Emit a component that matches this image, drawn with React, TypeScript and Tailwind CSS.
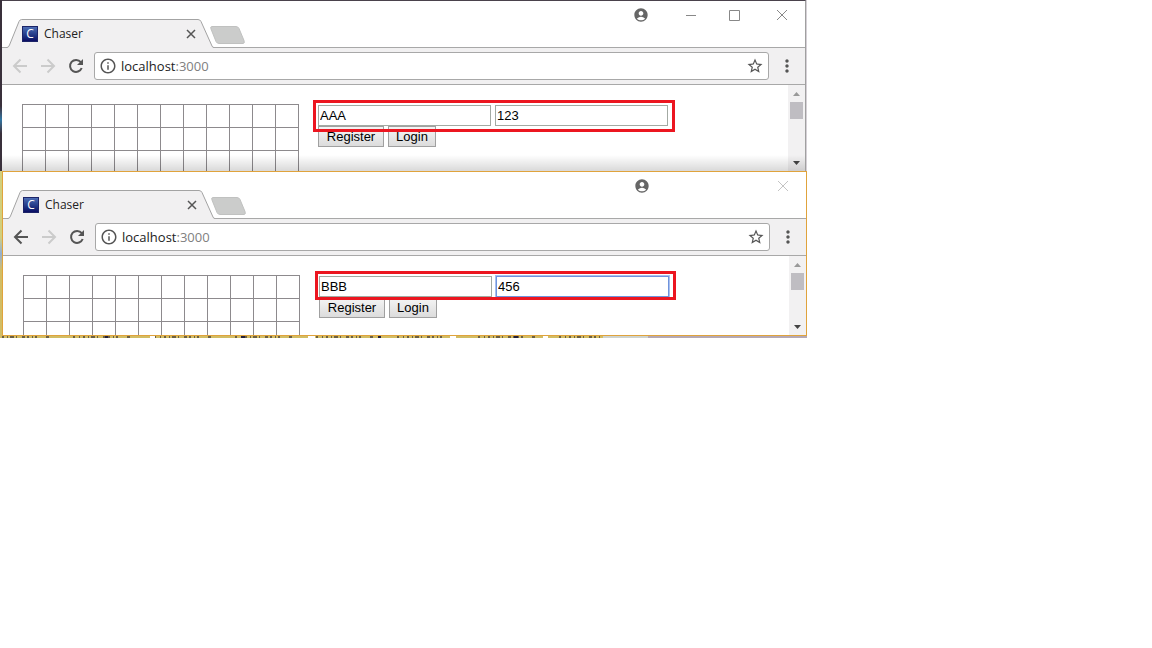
import React from "react";
import { MdAccountCircle, MdInfoOutline, MdMoreVert, MdStarBorder } from "react-icons/md";

type BrowserWindowProps = {
  id: string;
  user: string;
  pass: string;
  active: boolean;
};

function WindowControls({ active }: { active: boolean }) {
  return (
    <div className="flex h-7 items-center text-[#888888]">
      <button type="button" aria-label="Account" className="mr-9 text-[#666666]">
        <MdAccountCircle size={16} />
      </button>
      <button type="button" aria-label="Minimize" className={active ? "invisible mr-8" : "mr-8"}>
        <svg width="12" height="12" viewBox="0 0 12 12" fill="none" stroke="currentColor">
          <path d="M1 6.5h10" />
        </svg>
      </button>
      <button type="button" aria-label="Maximize" className={active ? "invisible mr-9" : "mr-9"}>
        <svg width="11" height="11" viewBox="0 0 11 11" fill="none" stroke="currentColor">
          <path d="M.5.5h10v10h-10z" />
        </svg>
      </button>
      <button type="button" aria-label="Close" className={active ? "mr-[17px] text-[#c4c4c4]" : "mr-[17px]"}>
        <svg width="12" height="12" viewBox="0 0 12 12" fill="none" stroke="currentColor">
          <path d="M1 1l10 10M11 1L1 11" />
        </svg>
      </button>
    </div>
  );
}

function Tab() {
  return (
    <div className="relative -mb-px ml-1 flex h-[29px] w-[208px] items-center pt-px">
      <svg className="absolute inset-0" width="208" height="29" viewBox="0 0 208 29">
        <path d="M0 29V28.5H1Q2.500 28.500 3.500 26L13 2.500Q14 .5 15.500 .5H192Q194 .5 195 2.500L206 27Q206.500 28.500 208 28.500V29Z" fill="#f1f0f1" />
        <path d="M0 28.5H1Q2.500 28.500 3.500 26L13 2.500Q14 .5 15.500 .5H192Q194 .5 195 2.500L206 27Q206.500 28.500 208 28.500" fill="none" stroke="#a3a3a3" />
      </svg>
      <span className="relative ml-4 flex size-4 items-center justify-center border border-[#1c2468] bg-linear-to-b from-[#4c6cb4] to-[#0c0c64] font-['Open_Sans',sans-serif] text-[12px] leading-3 text-white">
        C
      </span>
      <span className="relative ml-1.5 flex-1 font-['Open_Sans',sans-serif] text-[12px] leading-4 text-[#222222]">
        Chaser
      </span>
      <button type="button" aria-label="Close tab" className="relative mr-[18px] text-[#555555]">
        <svg width="10" height="10" viewBox="0 0 10 10" fill="none" stroke="currentColor" strokeWidth="1.500">
          <path d="M1 1l8 8M9 1L1 9" />
        </svg>
      </button>
    </div>
  );
}

function Toolbar({ active }: { active: boolean }) {
  return (
    <div className="flex h-[37px] items-center border-b border-[#a8a8a8] bg-[#f1f0f1] pl-2 text-[#555555]">
      <button type="button" aria-label="Back" className={active ? "mr-2" : "mr-2 text-[#cbcbcb]"}>
        <svg width="20" height="20" viewBox="0 0 20 20" fill="none" stroke="currentColor" strokeWidth="2">
          <path d="M17 10H4.500M10.500 3.500L4 10l6.500 6.500" />
        </svg>
      </button>
      <button type="button" aria-label="Forward" className="mr-2 text-[#cbcbcb]">
        <svg width="20" height="20" viewBox="0 0 20 20" fill="none" stroke="currentColor" strokeWidth="2">
          <path d="M3 10h12.500M9.500 3.500L16 10l-6.500 6.500" />
        </svg>
      </button>
      <button type="button" aria-label="Reload" className="mr-2">
        <svg width="20" height="20" viewBox="0 0 20 20" fill="none" stroke="currentColor" strokeWidth="2">
          <path d="M14.800 6.200A6 6 0 1 0 15.700 12" />
          <path d="M17 3v6h-6z" fill="currentColor" stroke="none" />
        </svg>
      </button>
      <div className="flex h-7 min-w-0 flex-1 items-center rounded-[3px] border border-[#a8a8a8] bg-white px-1">
        <MdInfoOutline size={18} />
        <a href="http://localhost:3000" className="ml-1 flex-1 font-['Open_Sans',sans-serif] text-[13px] leading-5 text-[#222222]">
          localhost<span className="text-[#808080]">:3000</span>
        </a>
        <button type="button" aria-label="Bookmark">
          <MdStarBorder size={18} />
        </button>
      </div>
      <button type="button" aria-label="Menu" className="mx-2">
        <MdMoreVert size={20} />
      </button>
    </div>
  );
}

function Board() {
  return (
    <div className="ml-5 mt-[19px] grid w-[277px] shrink-0 grid-cols-12 border-l border-t border-[#8d8a8d]">
      {Array.from({ length: 48 }, (_, i) => (
        <div key={i} className="h-[23px] border-b border-r border-[#8d8a8d]" />
      ))}
    </div>
  );
}

function Scrollbar() {
  return (
    <div className="flex w-[17px] shrink-0 flex-col items-center bg-[#f2f1f2] pb-1.5 pt-[7px]">
      <svg width="7" height="4" viewBox="0 0 7 4" fill="#999999">
        <path d="M0 4L3.500 0 7 4Z" />
      </svg>
      <div className="mt-1.5 h-[17px] w-[13px] bg-[#bfbdc2]" />
      <svg className="mt-auto" width="7" height="4" viewBox="0 0 7 4" fill="#444444">
        <path d="M0 0H7L3.500 4Z" />
      </svg>
    </div>
  );
}

const field =
  "h-[21px] w-[173px] border bg-white px-px font-['Liberation_Sans',sans-serif] text-[13px] leading-4 text-black outline-none";
const action =
  "h-[21px] border border-[#a0a0a0] bg-linear-to-b from-[#f5f5f5] to-[#dcdcdc] font-['Liberation_Sans',sans-serif] text-[13px] leading-4 text-black";

function LoginForm({ id, user, pass, active }: BrowserWindowProps) {
  return (
    <form className="ml-[19px] mt-5 min-w-0 flex-1" onSubmit={(e) => e.preventDefault()}>
      <div className="relative flex w-[350px] gap-1">
        <input id={`${id}-user`} aria-label="User name" defaultValue={user} className={`${field} border-[#a3aaa3]`} />
        <input
          id={`${id}-pass`}
          aria-label="Password"
          defaultValue={pass}
          className={`${field} ${active ? "border-[#6f93dc] ring-1 ring-[#a9c0ee]" : "border-[#a3aaa3]"}`}
        />
        <div
          className={
            active
              ? "pointer-events-none absolute -bottom-[3px] -left-1 -right-[7px] -top-[5px] border-3 border-[#ec1620]"
              : "pointer-events-none absolute -bottom-1.5 -left-[5px] -right-[7px] -top-[5px] border-3 border-[#ec1620]"
          }
        />
      </div>
      <div className="flex gap-1">
        <button type="submit" className={`${action} w-[66px]`}>Register</button>
        <button type="button" className={`${action} w-12`}>Login</button>
      </div>
    </form>
  );
}

function BrowserWindow(props: BrowserWindowProps) {
  const { active } = props;
  return (
    <section
      className={
        active
          ? "min-w-0 flex-1 border border-[#e0a33c] bg-white"
          : "min-w-0 flex-1 border-r border-t border-r-[#a0a0a0] border-t-[#4a424c] bg-white"
      }
    >
      <header className="flex h-[47px] items-end justify-between border-b border-[#a8a8a8]">
        <div className="flex">
          <Tab />
          <button type="button" aria-label="New tab" className="-ml-1 mt-[7px] h-[18px]">
            <svg width="36" height="18" viewBox="0 0 36 18">
              <path d="M2 .5H26Q28 .5 29 2.500L34 14.500Q35 17.500 33 17.500H9Q7 17.500 6 15.500L1 3Q0 .5 2 .5Z" fill="#cbcccb" stroke="#c0c1c0" />
            </svg>
          </button>
        </div>
        <div className="self-start">
          <WindowControls active={active} />
        </div>
      </header>
      <Toolbar active={active} />
      <div className={active ? "relative flex h-[79px] overflow-hidden" : "relative flex h-[86px] overflow-hidden"}>
        <Board />
        <LoginForm {...props} />
        <Scrollbar />
        {!active && (
          <div className="pointer-events-none absolute inset-x-0 bottom-0 h-4 bg-linear-to-b from-transparent to-black/15" />
        )}
      </div>
    </section>
  );
}

function DesktopEdge() {
  return (
    <svg className="block h-0.5 w-full" viewBox="0 0 807 2" preserveAspectRatio="none" fill="none">
      <path d="M0 1H605" stroke="#d2bd64" strokeWidth="2" />
      <path d="M2 1H602" stroke="#6b6044" strokeWidth="2" strokeDasharray="2 3 1 2 4 2 1 5 3 2 2 3 1 2 2 9 3 24 2 4 1 3" />
      <path d="M150 1h5M308 1h7M450 1h6M543 1h5" stroke="#ffffff" strokeWidth="2" />
      <path d="M105 1h3M241 1h4M378 1h3M514 1h4" stroke="#22203a" strokeWidth="2" />
      <path d="M603 1H648" stroke="#cfd4cf" strokeWidth="2" />
      <path d="M648 1H807" stroke="#b5a9b5" strokeWidth="2" />
    </svg>
  );
}

export default function App() {
  return (
    <main className="min-h-screen bg-white">
      <div className="w-full max-w-[807px]">
        <div className="flex">
          <div className="w-0.5 bg-linear-to-b from-[#39303b] from-62% via-[#2f77a4] via-70% to-[#39303b] to-78%" />
          <BrowserWindow id="first" user="AAA" pass="123" active={false} />
          <div className="w-px bg-[#d5d0d6]" />
        </div>
        <div className="flex">
          <div className="w-0.5 bg-linear-to-b from-[#d2cf7c] from-40% via-[#93aed0] via-50% to-[#d2bd64] to-60%" />
          <BrowserWindow id="second" user="BBB" pass="456" active />
        </div>
        <DesktopEdge />
      </div>
    </main>
  );
}
